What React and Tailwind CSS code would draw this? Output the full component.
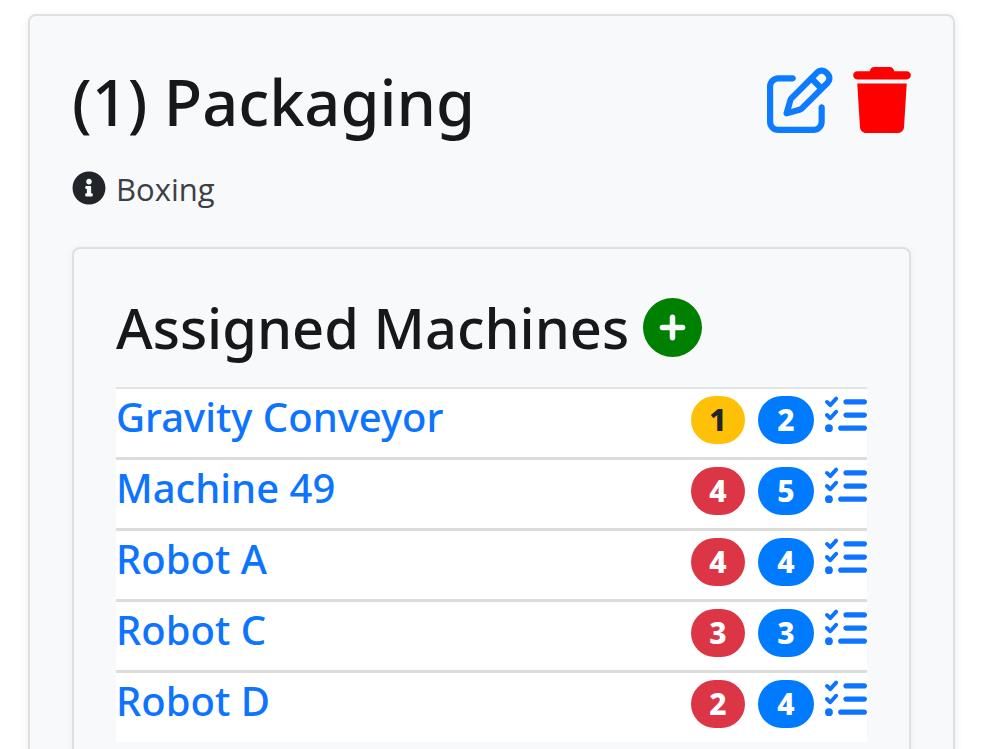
import React from "react";
import { FaInfoCircle } from "react-icons/fa";
import { FaCirclePlus, FaListCheck, FaRegPenToSquare, FaTrash } from "react-icons/fa6";

const machines = [
  { name: "Gravity Conveyor", open: 1, total: 2, badge: "bg-[#ffc107] text-[#212529]" },
  { name: "Machine 49", open: 4, total: 5, badge: "bg-[#dc3545] text-white" },
  { name: "Robot A", open: 4, total: 4, badge: "bg-[#dc3545] text-white" },
  { name: "Robot C", open: 3, total: 3, badge: "bg-[#dc3545] text-white" },
  { name: "Robot D", open: 2, total: 4, badge: "bg-[#dc3545] text-white" },
];

const MachineRow = ({ machine }) => (
  <li className="flex h-[71px] items-start justify-between border-b-[3px] border-[#dcdcdc] bg-white last:h-[69px] last:border-b-0">
    <a href="#" className="text-[40px] leading-[56px] font-medium text-[#0d74ff]">
      {machine.name}
    </a>
    <div className="flex items-start pt-[5px] text-[30px] leading-[48px] font-extrabold">
      <span className={`mt-0.5 w-[54px] rounded-full text-center ${machine.badge}`}>{machine.open}</span>
      <span className="mt-0.5 ml-[13px] w-14 rounded-full bg-[#007bff] text-center text-white">{machine.total}</span>
      <button type="button" aria-label={`Tasks for ${machine.name}`} className="ml-[11px] text-[#0d74ff]">
        <FaListCheck className="size-[42px]" />
      </button>
    </div>
  </li>
);

const App = () => {
  return (
    <div className="bg-white pt-[14px] pr-[45px] pl-7 font-['Noto_Sans','Open_Sans',sans-serif] text-[#16191c]">
      <section className="rounded-lg border-2 border-[#dfe0e1] bg-[#f8f9fb] px-[42px] pt-10 pb-[42px] shadow-[0_2px_8px_rgba(0,0,0,0.08)]">
        <header className="flex items-start justify-between">
          <h1 className="text-[63px] leading-[92px] font-medium">(1) Packaging</h1>
          <div className="flex gap-5 pt-[11px]">
            <button type="button" aria-label="Edit" className="text-[#0d7bff]">
              <FaRegPenToSquare className="size-[66px]" />
            </button>
            <button type="button" aria-label="Delete" className="text-[#ff0000]">
              <FaTrash className="h-[66px] w-[58px]" />
            </button>
          </div>
        </header>

        <p className="mt-[18px] flex items-center gap-[10px] font-['Open_Sans',sans-serif] text-[31px] leading-[46px] text-[#3c4045]">
          <FaInfoCircle className="mb-0.5 size-[34px] text-[#212529]" />
          Boxing
        </p>

        <div className="mt-[35px] rounded-lg border-2 border-[#dfe0e1] bg-[#f8f9fb] px-[42px] pt-[38px] pb-[42px] shadow-[0_2px_8px_rgba(0,0,0,0.05)]">
          <div className="flex items-center gap-[14px]">
            <h2 className="text-[56px] leading-20 font-medium">Assigned Machines</h2>
            <button type="button" aria-label="Assign machine" className="text-[#008000]">
              <FaCirclePlus className="size-[59px]" />
            </button>
          </div>
          <ul className="mt-5 border-t-2 border-[#e2e3e4]">
            {machines.map((m) => (
              <MachineRow key={m.name} machine={m} />
            ))}
          </ul>
        </div>
      </section>
    </div>
  );
};

export default App;
